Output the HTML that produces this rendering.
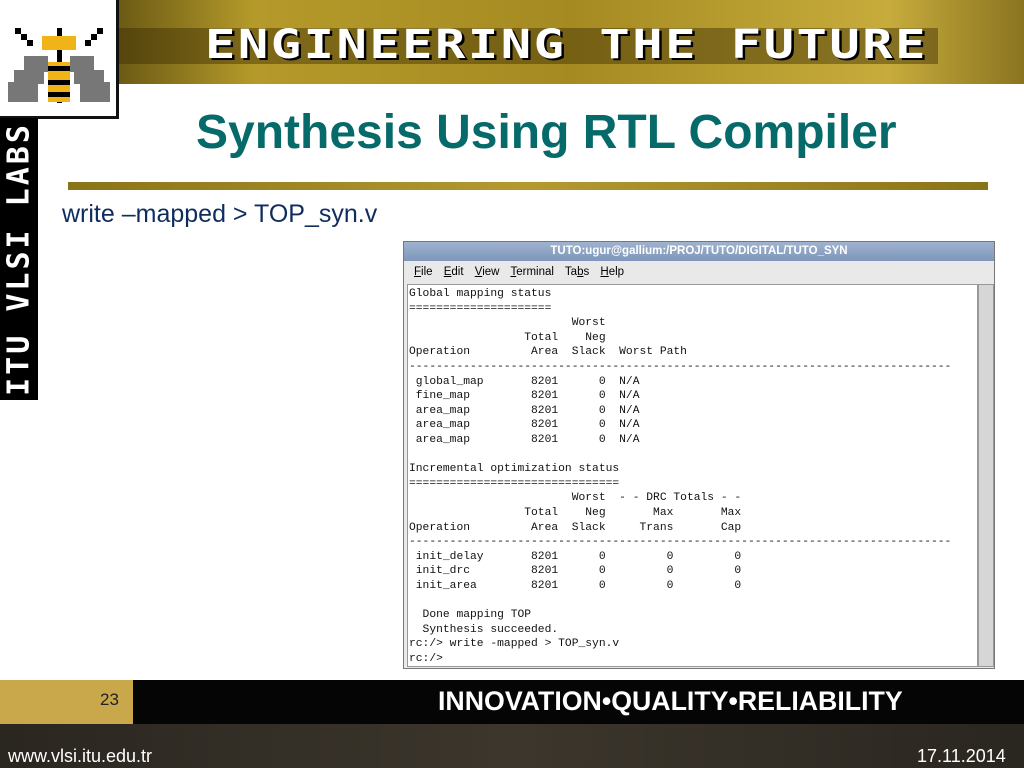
<!DOCTYPE html><html><head><meta charset="utf-8"><style>
body{margin:0;width:1024px;height:768px;position:relative;background:#fff;overflow:hidden;font-family:"Liberation Sans",sans-serif}
.a{position:absolute}
.hdr{left:118px;top:0;width:906px;height:84px;background:linear-gradient(90deg,#6b5a14 0%,#b59a2a 15%,#a58a22 50%,#c7ac3c 85%,#8a7420 100%)}
.hdr2{left:118px;top:28px;width:820px;height:36px;background:rgba(60,45,5,.45)}
.eng{left:205px;top:22px;font-family:"DejaVu Sans Mono",monospace;font-weight:bold;font-size:40px;color:#fff;letter-spacing:2px;transform:scaleX(1.26);transform-origin:left;text-shadow:2px 2px 0 #000}
.logo{left:0;top:0;width:116px;height:116px;background:#fff;border-right:3px solid #111;border-bottom:3px solid #111}
.strip{left:0;top:118px;width:38px;height:282px;background:#000}
.vt{left:19px;top:259px;transform:translate(-50%,-50%) rotate(-90deg);color:#fff;font-family:"DejaVu Sans Mono",monospace;font-weight:bold;font-size:30px;white-space:nowrap;letter-spacing:3px}
h1{position:absolute;left:196px;top:105px;margin:0;font-size:48px;color:#066a6a;font-weight:bold}
.bar{left:68px;top:182px;width:920px;height:8px;background:linear-gradient(90deg,#8a7418,#b39a30,#8a7418)}
.sub{left:62px;top:200px;font-size:25px;color:#0f2c5e}
.win{left:403px;top:241px;width:590px;height:426px;border:1px solid #777;background:#e9e9e9}
.tb{left:0;top:0;width:590px;height:19px;background:linear-gradient(#9fb3cf,#7f96ba);color:#fff;font-size:11.5px;font-weight:bold;text-align:center;line-height:19px}
.menu{left:10px;top:24px;font-size:11.5px;word-spacing:8px}
.term{left:3px;top:42px;width:569px;height:381px;background:#fff;border:1px solid #999}
pre{margin:0;position:absolute;left:1px;top:2px;font-family:"Liberation Mono",monospace;font-size:11.3px;line-height:14.6px;color:#111}
.sb{left:574px;top:42px;width:14px;height:381px;background:#d6d6d6;border:1px solid #999}
.foot1{left:0;top:680px;width:1024px;height:44px;background:#050505}
.gold{left:0;top:680px;width:133px;height:44px;background:#c9a84c}
.foot2{left:0;top:724px;width:1024px;height:44px;background:linear-gradient(90deg,#2a2620,#3c362c 50%,#2a2620)}
.ivq{left:438px;top:686px;color:#fff;font-weight:bold;font-size:27px;transform:scaleX(.99);transform-origin:left;letter-spacing:0}
</style></head><body>
<div class="a hdr"></div><div class="a hdr2"></div>
<div class="a eng">ENGINEERING THE FUTURE</div>
<div class="a logo"><svg width="116" height="116" viewBox="0 0 116 116">
<g fill="#000"><rect x="15" y="28" width="6" height="6"/><rect x="21" y="34" width="6" height="6"/><rect x="27" y="40" width="6" height="6"/><rect x="97" y="28" width="6" height="6"/><rect x="91" y="34" width="6" height="6"/><rect x="85" y="40" width="6" height="6"/><rect x="57" y="28" width="5" height="75"/></g>
<g fill="#f0b418"><rect x="42" y="36" width="34" height="14"/><rect x="48" y="62" width="22" height="40"/></g>
<g fill="#777"><rect x="8" y="82" width="30" height="20"/><rect x="14" y="70" width="30" height="14"/><rect x="24" y="56" width="24" height="16"/><rect x="80" y="82" width="30" height="20"/><rect x="74" y="70" width="30" height="14"/><rect x="70" y="56" width="24" height="16"/></g>
<g fill="#000"><rect x="48" y="66" width="22" height="5"/><rect x="48" y="80" width="22" height="5"/><rect x="48" y="92" width="22" height="5"/></g></svg></div>
<div class="a strip"></div><div class="a vt">ITU VLSI LABS</div>
<h1>Synthesis Using RTL Compiler</h1>
<div class="a bar"></div>
<div class="a sub">write –mapped &gt; TOP_syn.v</div>
<div class="a win">
<div class="a tb">TUTO:ugur@gallium:/PROJ/TUTO/DIGITAL/TUTO_SYN</div>
<div class="a menu"><u>F</u>ile <u>E</u>dit <u>V</u>iew <u>T</u>erminal Ta<u>b</u>s <u>H</u>elp</div>
<div class="a term"><pre>Global mapping status
=====================
                        Worst
                 Total    Neg
Operation         Area  Slack  Worst Path
--------------------------------------------------------------------------------
 global_map       8201      0  N/A
 fine_map         8201      0  N/A
 area_map         8201      0  N/A
 area_map         8201      0  N/A
 area_map         8201      0  N/A

Incremental optimization status
===============================
                        Worst  - - DRC Totals - -
                 Total    Neg       Max       Max
Operation         Area  Slack     Trans       Cap
--------------------------------------------------------------------------------
 init_delay       8201      0         0         0
 init_drc         8201      0         0         0
 init_area        8201      0         0         0

  Done mapping TOP
  Synthesis succeeded.
rc:/&gt; write -mapped &gt; TOP_syn.v
rc:/&gt;</pre></div>
<div class="a sb"></div>
</div>
<div class="a foot1"></div><div class="a gold"></div>
<div class="a" style="left:100px;top:690px;font-size:17px;color:#222">23</div>
<div class="a ivq">INNOVATION•QUALITY•RELIABILITY</div>
<div class="a foot2"></div>
<div class="a" style="left:8px;top:746px;font-size:18px;color:#fff">www.vlsi.itu.edu.tr</div>
<div class="a" style="left:917px;top:746px;font-size:18px;color:#fff">17.11.2014</div>
</body></html>
